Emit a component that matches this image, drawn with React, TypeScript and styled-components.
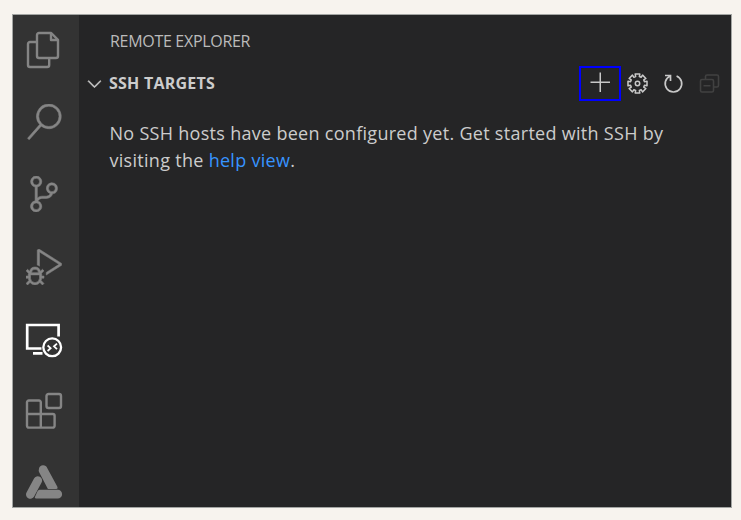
import React from "react";
import styled, { createGlobalStyle } from "styled-components";
import {
  VscSearch,
  VscSourceControl,
  VscDebugAlt,
  VscAdd,
  VscChevronDown,
} from "react-icons/vsc";

const GlobalStyle = createGlobalStyle`
  * { box-sizing: border-box; }
  body { margin: 0; background: #f7f3ee; }
`;

const Page = styled.main`
  width: 741px;
  height: 520px;
  padding: 14px 0 0 12px;
  background: #f7f3ee;
  font-family: "Open Sans", "Noto Sans", sans-serif;
  color: #cccccc;
`;

const Frame = styled.div`
  display: flex;
  width: 720px;
  height: 494px;
  border: 1px solid #a3a5a3;
  background: #252526;
  overflow: hidden;
`;

const ActivityBar = styled.nav`
  display: grid;
  flex: 0 0 66px;
  grid-template-rows: 72px 72px 73px 73px 72px 71px 40px;
  padding: 15px 0 0 11px;
  background: #333333;
`;

const Activity = styled.div<{ $active?: boolean; $glyph?: boolean }>`
  display: flex;
  align-items: flex-start;
  color: ${(p) => (p.$active ? "#ffffff" : "#858585")};
  svg {
    display: block;
    width: 40px;
    height: 40px;
    padding: ${(p) => (p.$glyph ? "2px" : "0")};
    stroke-width: ${(p) => (p.$glyph ? "0.35px" : "2.4px")};
  }
`;

const Panel = styled.section`
  flex: 1;
  min-width: 0;
`;

const Title = styled.h1`
  margin: 0;
  padding: 16px 0 0 31px;
  height: 50px;
  font-size: 16px;
  line-height: 20px;
  font-weight: 400;
  letter-spacing: -0.3px;
  color: #bbbbbb;
`;

const SectionHeader = styled.header`
  display: flex;
  align-items: center;
  height: 36px;
  padding-left: 5px;
`;

const Chevron = styled(VscChevronDown)`
  width: 21px;
  height: 21px;
  flex: none;
  stroke: currentColor;
  stroke-width: 0.4px;
`;

const SectionName = styled.h2`
  margin: 0 auto 0 4px;
  font-size: 16px;
  line-height: 20px;
  font-weight: 700;
  letter-spacing: 0.23px;
`;

const Actions = styled.div`
  display: flex;
  align-items: center;
  padding-right: 4px;
`;

const Action = styled.div<{ $highlight?: boolean; $dim?: boolean }>`
  display: grid;
  place-items: center;
  width: ${(p) => (p.$highlight ? 42 : 36)}px;
  height: 35px;
  margin-right: ${(p) => (p.$highlight ? "-2px" : "0")};
  padding-left: ${(p) => (p.$highlight ? "2px" : "0")};
  border: ${(p) => (p.$highlight ? "2px solid #0000ff" : "0")};
  color: ${(p) => (p.$dim ? "#414141" : "#c8c8c8")};
  svg { display: block; width: 24px; height: 24px; }
`;

const Message = styled.p`
  margin: 19px 0 0 30.5px;
  font-size: 18px;
  line-height: 27px;
  letter-spacing: 0.29px;
  white-space: nowrap;
`;

const Link = styled.a`
  color: #3794ff;
`;

function FilesIcon() {
  return (
    <svg viewBox="0 0 40 40" fill="none" stroke="currentColor" strokeLinejoin="round">
      <path d="M13 12H6a2 2 0 0 0-2 2v21a2 2 0 0 0 2 2h17.2a2 2 0 0 0 2-2v-7" />
      <path d="M15 3h12.2L34 9.8V26a2 2 0 0 1-2 2H15a2 2 0 0 1-2-2V5a2 2 0 0 1 2-2z" />
      <path d="M27 3v7h7" />
    </svg>
  );
}

function RemoteIcon() {
  return (
    <svg viewBox="0 0 40 40" fill="none" stroke="currentColor">
      <path d="M34.6 16.5V5H3.2v23.500h14.300M9 33.400h9.500" strokeWidth="2.7" />
      <circle cx="28.2" cy="27.3" r="8.9" strokeWidth="2.3" />
      <path d="M23.6 25.500l3 2.700-3 2.800M33 23.600l-3 2.700 3 2.800" strokeWidth="1.8" />
    </svg>
  );
}

function ExtensionsIcon() {
  return (
    <svg viewBox="0 0 40 40" fill="none" stroke="currentColor">
      <path d="M4.8 8.500H15a1.800 1.800 0 0 1 1.800 1.800V22h12a1.800 1.800 0 0 1 1.800 1.800v10a1.800 1.800 0 0 1-1.800 1.800h-24A1.800 1.800 0 0 1 3 33.800V10.300A1.800 1.800 0 0 1 4.800 8.500zM3 22h13.800v13.600" />
      <rect x="22.5" y="2" width="14.5" height="14" rx="2" />
    </svg>
  );
}

function TriangleIcon() {
  return (
    <svg viewBox="0 0 40 40" fill="none" strokeLinecap="round">
      <path d="M6.3 31.500L13.800 17.500" stroke="currentColor" strokeWidth="8.6" />
      <path d="M19.2 7L28 23.500" stroke="#333333" strokeWidth="9.4" />
      <path d="M15 5.400a4.300 4.300 0 0 1 8.200-.4L33.500 24q.6 1.900-1.200 1.900h-8.400L15.300 9.500q-1-2-.3-4.100z" fill="currentColor" />
      <path d="M15.500 26.800H33.700a4.300 4.300 0 0 1 0 8.800H12q-1.900 0-1-1.800L13.500 28.300q.7-1.500 2-1.500z" fill="currentColor" />
    </svg>
  );
}

const TEETH = 8;

function gearOutline(cx: number, cy: number, outer: number, inner: number) {
  const corners: [number, number][] = [
    [-0.26, inner],
    [-0.24, outer],
    [0.24, outer],
    [0.26, inner],
  ];
  const points: string[] = [];
  for (let tooth = 0; tooth < TEETH; tooth++) {
    const mid = (tooth * 2 * Math.PI) / TEETH;
    corners.forEach(([turn, radius]) => {
      const x = cx + radius * Math.sin(mid + turn);
      const y = cy - radius * Math.cos(mid + turn);
      points.push(`${x.toFixed(2)} ${y.toFixed(2)}`);
    });
  }
  return `M${points.join("L")}Z`;
}

function GearIcon() {
  return (
    <svg viewBox="0 0 24 24" fill="none" stroke="currentColor" strokeWidth="1.5" strokeLinejoin="round">
      <path d={gearOutline(12.5, 12.5, 9.8, 7.2)} />
      <circle cx="12.5" cy="12.5" r="2.2" />
    </svg>
  );
}

function RefreshIcon() {
  return (
    <svg viewBox="0 0 24 24" fill="none" stroke="currentColor" strokeWidth="1.7">
      <path d="M9.3 5A8.300 8.300 0 1 0 15.600 5" />
      <path d="M4 4.500H9.500V10" />
    </svg>
  );
}

function CollapseIcon() {
  return (
    <svg viewBox="0 0 24 24" fill="none" stroke="currentColor" strokeWidth="1.6">
      <rect x="3.5" y="8.5" width="13" height="12.5" rx="1.5" />
      <path d="M8.500 8.500V5.500A1.500 1.500 0 0 1 10 4H20A1.500 1.500 0 0 1 21.500 5.500V14.500A1.500 1.500 0 0 1 20 16H16.500M6.500 14.700H13.500" />
    </svg>
  );
}

export default function App() {
  return (
    <Page>
      <GlobalStyle />
      <Frame>
        <ActivityBar>
          <Activity><FilesIcon /></Activity>
          <Activity $glyph><VscSearch /></Activity>
          <Activity $glyph><VscSourceControl /></Activity>
          <Activity $glyph><VscDebugAlt /></Activity>
          <Activity $active><RemoteIcon /></Activity>
          <Activity><ExtensionsIcon /></Activity>
          <Activity><TriangleIcon /></Activity>
        </ActivityBar>
        <Panel>
          <Title>REMOTE EXPLORER</Title>
          <SectionHeader>
            <Chevron />
            <SectionName>SSH TARGETS</SectionName>
            <Actions>
              <Action $highlight><VscAdd /></Action>
              <Action><GearIcon /></Action>
              <Action><RefreshIcon /></Action>
              <Action $dim><CollapseIcon /></Action>
            </Actions>
          </SectionHeader>
          <Message>
            No SSH hosts have been configured yet. Get started with SSH by
            <br />
            visiting the <Link>help view</Link>.
          </Message>
        </Panel>
      </Frame>
    </Page>
  );
}
